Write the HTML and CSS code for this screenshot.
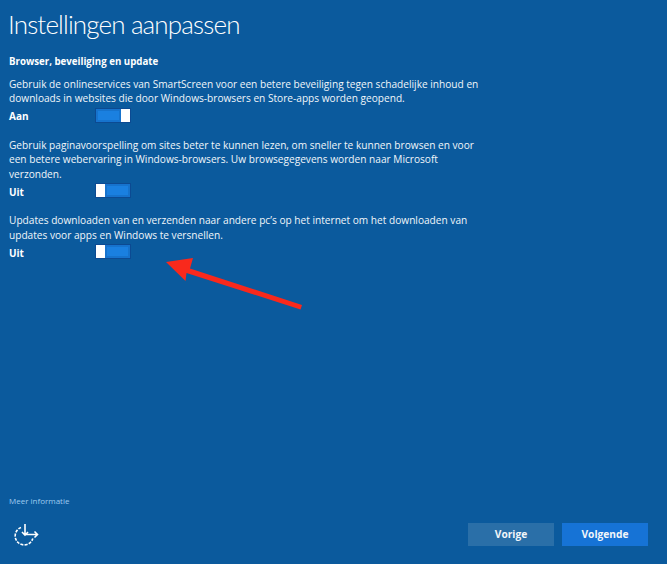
FILE: index.html
```html
<!DOCTYPE html>
<html lang="nl">
<head>
<meta charset="utf-8">
<title>Instellingen aanpassen</title>
<link rel="stylesheet" href="styles.css">
</head>
<body>
<main class="page">
  <div class="content">
    <h1 class="title">Instellingen aanpassen</h1>
    <h2 class="section">Browser, beveiliging en update</h2>
    <section class="option">
      <p class="desc">Gebruik de onlineservices van SmartScreen voor een betere beveiliging tegen schadelijke inhoud en<br>downloads in websites die door Windows-browsers en Store-apps worden geopend.</p>
      <div class="state"><span class="state-label">Aan</span><span class="toggle on"><span class="track"></span><span class="thumb"></span></span></div>
    </section>
    <section class="option">
      <p class="desc">Gebruik paginavoorspelling om sites beter te kunnen lezen, om sneller te kunnen browsen en voor<br>een betere webervaring in Windows-browsers. Uw browsegegevens worden naar Microsoft<br>verzonden.</p>
      <div class="state"><span class="state-label">Uit</span><span class="toggle"><span class="thumb"></span><span class="track"></span></span></div>
    </section>
    <section class="option">
      <p class="desc">Updates downloaden van en verzenden naar andere pc’s op het internet om het downloaden van<br>updates voor apps en Windows te versnellen.</p>
      <div class="state"><span class="state-label">Uit</span><span class="toggle"><span class="thumb"></span><span class="track"></span></span></div>
    </section>
  </div>
  <footer class="footer">
    <a class="more">Meer informatie</a>
    <div class="actions">
      <svg class="access" width="26" height="26" viewBox="0 -1 26 26" fill="none" stroke="#fff" stroke-width="1.6">
        <path d="M8 5.500A9 9 0 1 0 19.800 16.500" stroke-dasharray="3 1.200"/>
        <path d="M12 2v11M9 10l3 3.200 3-3.200M12 12.500h12.500M21.500 9.500l3 3-3 3"/>
      </svg>
      <div class="buttons">
        <button class="btn back">Vorige</button>
        <button class="btn next">Volgende</button>
      </div>
    </div>
  </footer>
  <svg class="arrow" width="144" height="60" viewBox="160 255 144 60">
    <path d="M166 262L193 258L190 268.500L302 305L300.500 309.500L186.500 273L185.500 281Z" fill="#f9291c"/>
  </svg>
</main>
</body>
</html>
```
FILE: styles.css
```css
* { box-sizing: border-box; }
html, body { margin: 0; padding: 0; }
body { background: #0b5a9d; color: #fff; font-family: "Open Sans", "Noto Sans", sans-serif; }
.page { position: relative; width: 667px; height: 564px; overflow: hidden; display: flex; flex-direction: column; justify-content: space-between; }
.content { padding: 6px 0 0 9px; }
.title { margin: 0 0 0 -1px; font-family: Lato, "Open Sans", sans-serif; font-size: 26px; line-height: 36px; font-weight: 300; letter-spacing: -0.850px; }
.section { margin: 13px 0 7.700px; font-size: 9.700px; line-height: 14px; font-weight: 700; }
.option { margin-bottom: 14.600px; }
.desc { margin: 0; font-size: 10.150px; line-height: 14.400px; color: #f1f6fa; }
.state { display: flex; align-items: center; height: 16px; margin-top: 1.600px; }
.state-label { width: 86px; margin-top: 2px; font-size: 10px; font-weight: 700; }
.toggle { display: flex; width: 36px; height: 15px; border: 1px solid #0c4a92; background: #0c4a92; }
.thumb { width: 9px; background: #fff; }
.track { flex: 1; background: #1a80e0; box-shadow: inset 0 0 0 2px #1673cd; }
.footer { padding: 0 19px 17px 9px; }
.more { display: block; font-size: 8px; line-height: 12px; color: #9fcbf0; margin-bottom: 14px; }
.actions { display: flex; justify-content: space-between; align-items: center; }
.access { margin-left: 4px; }
.buttons { display: flex; gap: 8px; }
.btn { width: 86px; height: 23px; border: 0; padding: 0; color: #f1f6fa; font-family: inherit; font-size: 10.200px; font-weight: 700; }
.back { background: #2a6fa8; }
.next { background: #1673d6; }
.arrow { position: absolute; left: 160px; top: 255px; }
```
